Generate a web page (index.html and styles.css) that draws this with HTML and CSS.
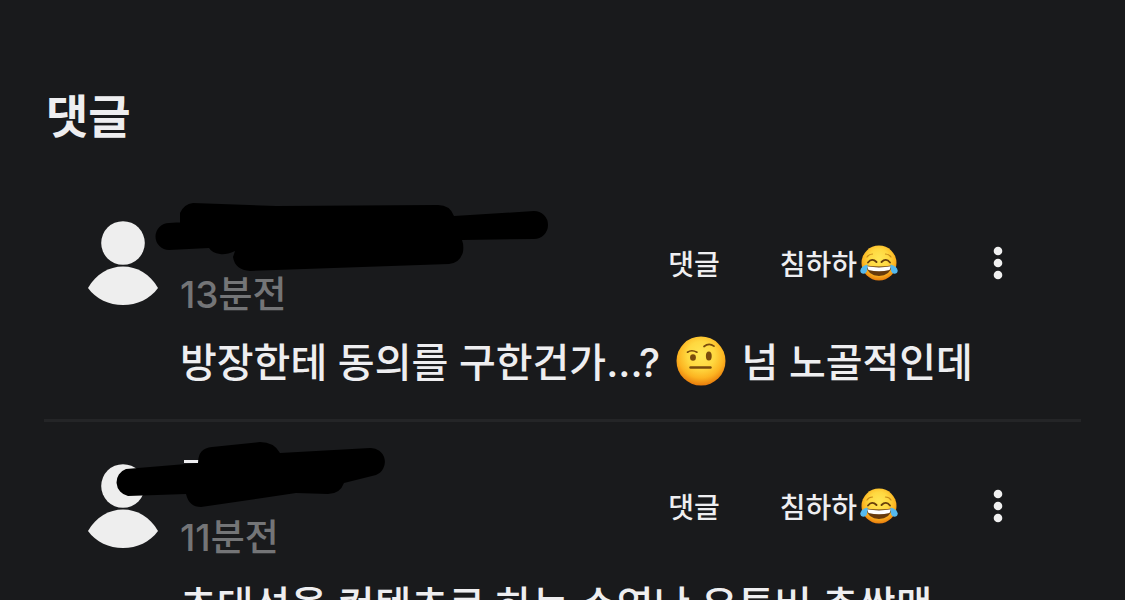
FILE: index.html
```html
<!DOCTYPE html>
<html lang="ko">
<head>
<meta charset="utf-8">
<meta name="viewport" content="width=device-width, initial-scale=1">
<title>댓글</title>
<link rel="stylesheet" href="styles.css">
</head>
<body>
<svg class="defs" width="0" height="0" aria-hidden="true">
  <defs>
    <radialGradient id="face" cx="50%" cy="38%" r="62%">
      <stop offset="0" stop-color="#ffe755"/>
      <stop offset=".45" stop-color="#ffd840"/>
      <stop offset=".75" stop-color="#fcb421"/>
      <stop offset="1" stop-color="#e87c0c"/>
    </radialGradient>
    <symbol id="person" viewBox="0 0 70 84">
      <circle cx="35" cy="22" r="21.8"/>
      <path d="M0 67C8 53 21 45.500 35 45.500S62 53 70 67C62 78 49 84 35 84S8 78 0 67Z"/>
    </symbol>
    <symbol id="dots" viewBox="0 0 10 34">
      <circle cx="5" cy="5" r="4.300"/><circle cx="5" cy="17" r="4.300"/><circle cx="5" cy="29" r="4.300"/>
    </symbol>
    <symbol id="joy" viewBox="0 0 38 36">
      <circle cx="19" cy="18" r="17.500" fill="url(#face)"/>
      <path d="M7 12Q9 9 12.500 9M31 12Q29 9 25.500 9" fill="none" stroke="#c88a18" stroke-width="1.200" stroke-linecap="round"/>
      <path d="M8 17.500Q12 12.500 16.500 17M30 17.500Q26 12.500 21.500 17" fill="none" stroke="#69400b" stroke-width="1.900" stroke-linecap="round"/>
      <path d="M6 20.500Q19 22.500 32 20.500Q30 31 19 31T6 20.500Z" fill="#673a0c"/>
      <path d="M7 21.300Q19 23.500 31 21.300L29.500 25Q19 27.500 8.500 25Z" fill="#fff"/>
      <path d="M7.500 19.500Q1 21 .3 25.500Q.5 29 4 28.800Q8 28 7.500 19.500Z" fill="#55b9ee"/>
      <path d="M30.500 19.500Q37 21 37.700 25.500Q37.500 29 34 28.800Q30 28 30.500 19.500Z" fill="#55b9ee"/>
    </symbol>
    <symbol id="brow" viewBox="0 0 50 50">
      <circle cx="25" cy="25" r="24.500" fill="url(#face)"/>
      <path d="M11.500 16.200Q15.500 13.300 21 16.200M28 10.500Q33 6.300 38 10.200" fill="none" stroke="#7a4b0c" stroke-width="1.700" stroke-linecap="round"/>
      <ellipse cx="17" cy="21.500" rx="2.900" ry="3.200" fill="#7a4b0c"/>
      <ellipse cx="32.800" cy="20" rx="2.900" ry="4.600" fill="#7a4b0c"/>
      <path d="M14.500 31.500H34.500" stroke="#7a4b0c" stroke-width="2.400" stroke-linecap="round"/>
    </symbol>
  </defs>
</svg>
<main class="comments">
  <h1 class="title">댓글</h1>

  <article class="comment">
    <header class="head">
      <svg class="avatar" aria-hidden="true"><use href="#person"/></svg>
      <div class="meta">
        <span class="name"></span>
        <time class="time">13분전</time>
      </div>
      <div class="actions">
        <button class="action" type="button">댓글</button>
        <button class="action" type="button">침하하<svg class="joy" aria-hidden="true"><use href="#joy"/></svg></button>
        <button class="more" type="button" aria-label="더보기"><svg class="dots" aria-hidden="true"><use href="#dots"/></svg></button>
      </div>
      <svg class="scribble" viewBox="0 0 480 128" aria-hidden="true">
        <path d="M81 38L94 36L94 14Q98 5 107 4L190 7L352 6Q364 6 368 17L448 12A14 14 0 0 1 448 40L376 41Q378 46 377 53Q374 64 363 65L164 72Q149 71 147 58L149 52Q140 56 134 55Q126 54 123 49L83 51A13 13 0 0 1 83 24L98 23L94 38Z"/>
      </svg>
    </header>
    <p class="text">방장한테 동의를 구한건가...? <svg class="brow" role="img" aria-label="의심하는 얼굴"><use href="#brow"/></svg> 넘 노골적인데</p>
  </article>

  <article class="comment">
    <header class="head">
      <svg class="avatar" aria-hidden="true"><use href="#person"/></svg>
      <div class="meta">
        <span class="name"></span>
        <time class="time">11분전</time>
      </div>
      <div class="actions">
        <button class="action" type="button">댓글</button>
        <button class="action" type="button">침하하<svg class="joy" aria-hidden="true"><use href="#joy"/></svg></button>
        <button class="more" type="button" aria-label="더보기"><svg class="dots" aria-hidden="true"><use href="#dots"/></svg></button>
      </div>
      <svg class="scribble" viewBox="0 0 480 128" aria-hidden="true">
        <path class="mark" d="M98 18H118V21H98Z"/>
        <path d="M40 27L112 21Q112 6 126 5L174 0Q188 0 194 11L284 6A14 14 0 0 1 290 33L258 41Q254 52 242 52L210 51L115 65Q103 65 100 52L42 54A14 14 0 0 1 40 27Z"/>
      </svg>
    </header>
    <p class="text">초대석을 컨텐츠로 하는 수염난 유튜버 춘쌉맨</p>
  </article>
</main>
</body>
</html>
```
FILE: styles.css
```css
* {
  box-sizing: border-box;
}

body {
  height: 100vh;
  margin: 0;
  overflow: hidden;
  background: #191a1c;
  color: #eeeef0;
  font-family: Inter, "Noto Sans CJK KR", sans-serif;
}

.defs {
  position: absolute;
}

.comments {
  padding: 84px 44px 0;
}

.title {
  margin: 0 0 31px;
  padding-left: 2px;
  font-size: 46px;
  font-weight: 700;
  line-height: 64px;
}

.comment {
  padding: 20px 0;
  border-bottom: 3px solid #242527;
}

.head {
  position: relative;
  display: flex;
  align-items: center;
  gap: 22px;
  padding: 0 66px 0 44px;
}

.avatar {
  flex: none;
  width: 70px;
  height: 84px;
  fill: #eeeeee;
}

.meta {
  flex: 1;
  font-size: 37px;
  font-weight: 500;
  line-height: 64px;
}

.name,
.time {
  display: block;
  min-height: 64px;
}

.time {
  color: #747577;
}

.actions {
  display: flex;
  align-items: center;
  gap: 60px;
}

.action,
.more {
  display: flex;
  align-items: center;
  padding: 0;
  border: 0;
  background: none;
  color: inherit;
  font: inherit;
  cursor: pointer;
}

.action {
  gap: 3px;
  font-family: "Noto Sans CJK KR", sans-serif;
  font-size: 28px;
  font-weight: 500;
  line-height: 40px;
}

.joy {
  width: 38px;
  height: 36px;
}

.more {
  justify-content: center;
  width: 34px;
  height: 48px;
  margin-left: 23px;
}

.dots {
  width: 10px;
  height: 34px;
  fill: #f0f0f0;
}

.scribble {
  position: absolute;
  top: 0;
  left: 42px;
  width: 480px;
  height: 128px;
  fill: #000;
  pointer-events: none;
}

.mark {
  fill: #eeeef0;
}

.text {
  margin: 0;
  padding-left: 136px;
  font-size: 40px;
  font-weight: 500;
  line-height: 72px;
  white-space: nowrap;
}

.brow {
  width: 50px;
  height: 50px;
  margin: 0 5px 10px;
  vertical-align: middle;
}
```
